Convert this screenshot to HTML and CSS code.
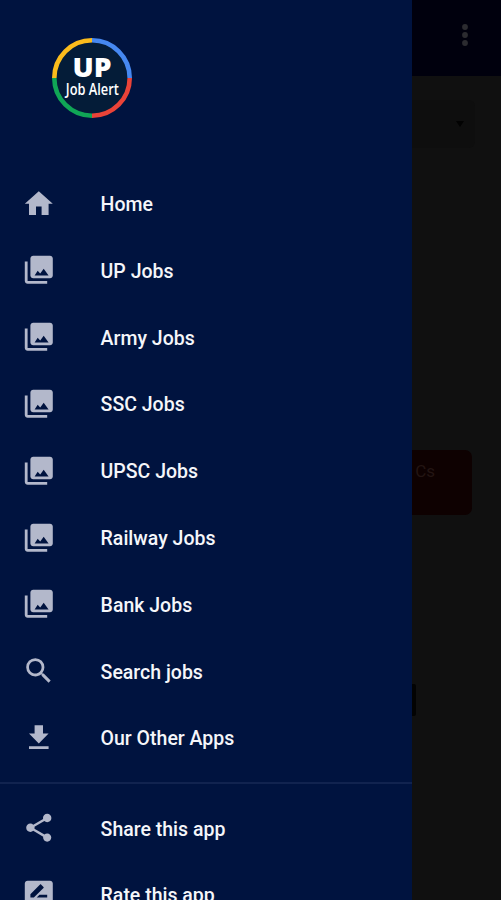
FILE: index.html
```html
<!DOCTYPE html>
<html lang="en">
<head>
  <meta charset="UTF-8">
  <meta name="viewport" content="width=device-width, initial-scale=1.0">
  <title>UP Job Alert</title>
  <link rel="stylesheet" href="styles.css">
</head>
<body>

  <svg width="0" height="0" class="icon-defs">
    <symbol id="library" viewBox="0 0 24 24">
      <path d="M22 16V4c0-1.100-.9-2-2-2H8c-1.100 0-2 .9-2 2v12c0 1.100.9 2 2 2h12c1.100 0 2-.9 2-2zM9 16l2.200-3.300 1.800 2 2.500-3.500L19 16zM2 6v14c0 1.100.9 2 2 2h14v-2H4V6H2z"/>
    </symbol>
  </svg>

  <div class="screen">
    <header class="app-bar">
      <svg class="more" viewBox="0 0 6 24">
        <circle cx="3" cy="4" r="2.900"/>
        <circle cx="3" cy="12" r="2.900"/>
        <circle cx="3" cy="20" r="2.900"/>
      </svg>
    </header>
    <main class="content">
      <div class="select"><span class="arrow"></span></div>
      <div class="card">Cs</div>
      <div class="button"></div>
    </main>

    <nav class="drawer">
      <svg class="logo" viewBox="0 0 80 80">
        <circle cx="40" cy="40" r="37" fill="#041c38"/>
        <g fill="none" stroke-width="4.600">
          <path d="M2.300 40A37.700 37.700 0 0 1 40 2.300" stroke="#fbbc1c"/>
          <path d="M40 2.300A37.700 37.700 0 0 1 77.700 40" stroke="#4688f1"/>
          <path d="M77.700 40A37.700 37.700 0 0 1 40 77.700" stroke="#ea4338"/>
          <path d="M40 77.700A37.700 37.700 0 0 1 2.300 40" stroke="#10a656"/>
        </g>
        <text class="logo-up" x="40" y="39.200" textLength="39" lengthAdjust="spacingAndGlyphs">UP</text>
        <text class="logo-name" x="40.300" y="57.300" textLength="53" lengthAdjust="spacingAndGlyphs">Job Alert</text>
      </svg>

      <ul class="menu">
        <li class="item">
          <svg class="icon" viewBox="0 0 24 24"><path d="M10 20v-6h4v6h5v-8h3L12 3 2 12h3v8z"/></svg>
          <span>Home</span>
        </li>
        <li class="item"><svg class="icon"><use href="#library"/></svg><span>UP Jobs</span></li>
        <li class="item"><svg class="icon"><use href="#library"/></svg><span>Army Jobs</span></li>
        <li class="item"><svg class="icon"><use href="#library"/></svg><span>SSC Jobs</span></li>
        <li class="item"><svg class="icon"><use href="#library"/></svg><span>UPSC Jobs</span></li>
        <li class="item"><svg class="icon"><use href="#library"/></svg><span>Railway Jobs</span></li>
        <li class="item"><svg class="icon"><use href="#library"/></svg><span>Bank Jobs</span></li>
        <li class="item">
          <svg class="icon" viewBox="0 0 24 24"><path d="M15.500 14h-.79l-.28-.27A6.471 6.471 0 0 0 16 9.500 6.500 6.500 0 1 0 9.500 16c1.610 0 3.090-.59 4.230-1.570l.27.28v.79l5 4.990L20.490 19l-4.990-5zm-6 0C7.010 14 5 11.990 5 9.500S7.010 5 9.500 5 14 7.010 14 9.500 11.990 14 9.500 14z"/></svg>
          <span>Search jobs</span>
        </li>
        <li class="item">
          <svg class="icon" viewBox="0 0 24 24"><path d="M19 9h-4V3H9v6H5l7 7 7-7zM5 18v2h14v-2H5z"/></svg>
          <span>Our Other Apps</span>
        </li>
      </ul>

      <ul class="menu menu-bottom">
        <li class="item">
          <svg class="icon" viewBox="0 0 24 24"><path d="M18 16.080c-.76 0-1.440.3-1.960.77L8.910 12.700c.05-.23.09-.46.09-.7s-.04-.47-.09-.7l7.050-4.110c.54.5 1.250.81 2.040.81 1.660 0 3-1.340 3-3s-1.340-3-3-3-3 1.340-3 3c0 .24.04.47.09.7L8.040 9.810C7.500 9.310 6.790 9 6 9c-1.660 0-3 1.340-3 3s1.340 3 3 3c.79 0 1.500-.31 2.040-.81l7.120 4.160c-.05.21-.08.43-.08.65 0 1.610 1.310 2.920 2.920 2.920s2.920-1.310 2.920-2.920-1.310-2.920-2.920-2.920z"/></svg>
          <span>Share this app</span>
        </li>
        <li class="item">
          <svg class="icon" viewBox="0 0 24 24"><path d="M20 2H4c-1.100 0-2 .9-2 2v18l4-4h14c1.100 0 2-.9 2-2V4c0-1.100-.9-2-2-2zM6 14v-2.470l6.880-6.880c.2-.2.51-.2.710 0l1.770 1.770c.2.2.2.510 0 .710L8.470 14H6zm12 0h-7.500l2-2H18v2z"/></svg>
          <span>Rate this app</span>
        </li>
      </ul>
    </nav>
  </div>

</body>
</html>
```
FILE: styles.css
```css
body {
  margin: 0;
  font-family: Roboto, "Liberation Sans", sans-serif;
  background-color: #101010;
}

.icon-defs {
  position: absolute;
}

.screen {
  position: relative;
  height: 900px;
  overflow: hidden;
}

/* dimmed page behind the drawer */
.app-bar {
  display: flex;
  justify-content: flex-end;
  align-items: center;
  box-sizing: border-box;
  height: 76px;
  padding: 0 33px 6px 0;
  background-color: #00000d;
}

.more {
  width: 6px;
  height: 24px;
  fill: #2b2b30;
}

.content {
  display: flex;
  flex-direction: column;
  padding: 24px 26px 0;
}

.select {
  display: flex;
  justify-content: flex-end;
  align-items: center;
  height: 48px;
  padding-right: 11px;
  border-radius: 6px;
  background-color: #0e0e0e;
}

.arrow {
  border: 4px solid transparent;
  border-top: 6px solid #020202;
  border-bottom: 0;
}

.card {
  box-sizing: border-box;
  height: 65px;
  margin: 302px 3px 0;
  padding: 11px 37px 0 0;
  border-radius: 7px;
  background-color: #0e0101;
  color: #231513;
  font-size: 17px;
  text-align: right;
}

.button {
  width: 330px;
  height: 32px;
  margin: 169px auto 0 60px;
  border-radius: 2px;
  background-color: #030303;
}

.drawer {
  position: absolute;
  top: 0;
  left: 0;
  width: 412.4px;
  height: 900px;
  overflow: hidden;
  background-color: #00133f;
}

.logo {
  display: block;
  width: 80px;
  height: 80px;
  margin: 38.400px 0 52.700px 52.300px;
}

.logo text {
  fill: #fff;
  text-anchor: middle;
}

.logo-up {
  font-family: "Open Sans", sans-serif;
  font-size: 27px;
  font-weight: 800;
}

.logo-name {
  font-family: "Open Sans", sans-serif;
  font-size: 16px;
  font-weight: 600;
}

.menu {
  list-style: none;
  margin: 0;
  padding: 0 0 10px;
}

.menu-bottom {
  padding-top: 11.500px;
  border-top: 2px solid #11234f;
}

.item {
  display: flex;
  align-items: center;
  gap: 45px;
  height: 66.800px;
  padding-left: 22px;
  color: #f5f6fa;
  font-size: 19.500px;
  font-weight: 500;
}

.icon {
  width: 33.600px;
  height: 33.600px;
  margin-top: -2px;
  fill: #b3b8cb;
}
```
